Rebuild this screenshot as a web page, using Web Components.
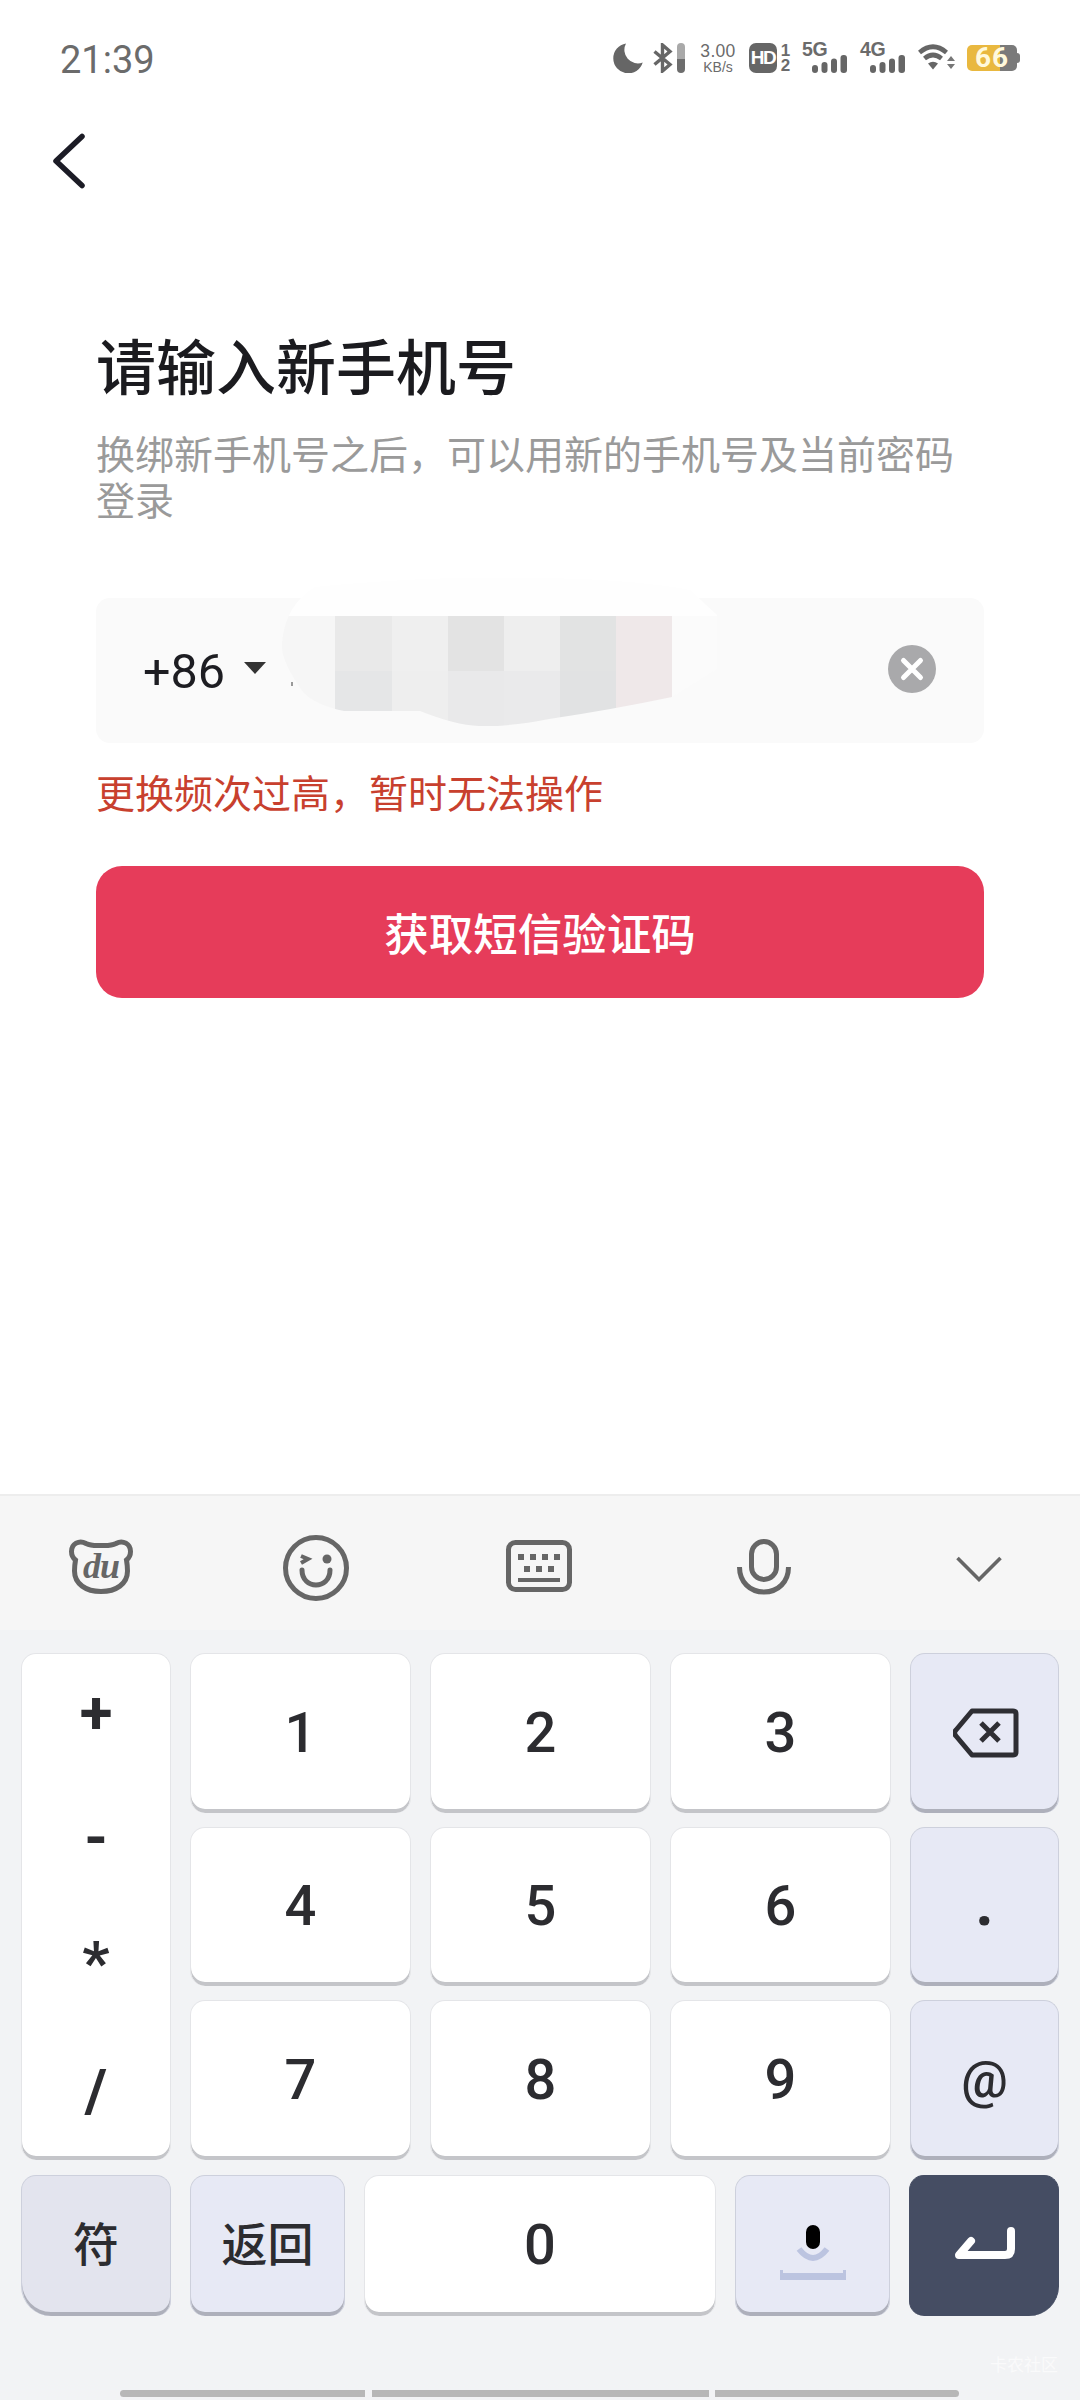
<!DOCTYPE html>
<html lang="zh">
<head>
<meta charset="utf-8">
<title>请输入新手机号</title>
<style>
  html, body { margin: 0; padding: 0; background: #fff; }
  body { font-family: "Noto Sans CJK SC", sans-serif; }
</style>
</head>
<body>
<app-screen></app-screen>
<script>
const templateStatusBar = document.createElement("template");
templateStatusBar.innerHTML = `
  <style>
    :host { display: flex; height: 118px; box-sizing: border-box; padding: 0 60px; align-items: center; justify-content: space-between; color: #6b6b6b; font-family: Roboto, sans-serif; flex: none; }
    .time { font-size: 38px; line-height: 40px; margin-top: 2px; }
    .icons { display: flex; align-items: center; height: 30px; margin-top: -2px; }
    svg { display: block; flex: none; fill: #666; }
    .pill { width: 8px; height: 30px; border-radius: 4px; margin-left: 3px; background: linear-gradient(#a9a9a9 52%, #6d6d6d 52%); }
    .speed { display: flex; flex-direction: column; align-items: center; margin-left: 14px; width: 38px; font-family: "Liberation Sans", sans-serif; }
    .speed b { font-weight: 400; font-size: 17.5px; line-height: 17px; letter-spacing: .3px; }
    .speed i { font-style: normal; font-size: 14px; line-height: 14px; }
    .hd { width: 28px; height: 30px; border-radius: 7px; background: #666; color: #fff; font: 700 19px/30px "Liberation Sans", sans-serif; text-align: center; letter-spacing: -1.5px; margin-left: 12px; }
    .frac { display: flex; flex-direction: column; align-items: center; margin-left: 3px; width: 11px; font: 700 17px/15px "Liberation Sans", sans-serif; }
    .sig { position: relative; width: 45px; height: 30px; margin-left: 11px; }
    .sig + .sig { margin-left: 13px; }
    .sig span { font: 700 19.500px/18px "Liberation Sans", sans-serif; letter-spacing: -.3px; display: block; margin-top: -3px; }
    .sig svg { position: absolute; right: 0; bottom: 0; }
    .wifi { margin-left: 13px; }
    .batt { position: relative; width: 50px; height: 26px; margin-left: 12px; margin-right: 3px; border-radius: 5px; background: linear-gradient(90deg, #e9b83f 66%, #7a7a7a 66%); color: #fff9dc; font: 700 28px/26px Roboto, sans-serif; text-align: center; letter-spacing: 1px; }
    .batt::after { content: ""; position: absolute; right: -3px; top: 8px; width: 3px; height: 10px; border-radius: 0 3px 3px 0; background: #7a7a7a; }
  </style>
  <span class="time">21:39</span>
  <div class="icons">
    <svg width="30" height="30" viewBox="0 0 30 30"><path d="M13 .5A15 15 0 1 0 29.7 19.5 13.5 13.5 0 0 1 13 .5Z"/></svg>
    <svg style="margin-left:10px" width="21" height="30" viewBox="0 0 21 30"><path d="M1.500 8.500 17 21.500 9.500 28V2L17 8.500 1.500 21.500" fill="none" stroke="#666" stroke-width="3.4"/></svg>
    <div class="pill"></div>
    <div class="speed"><b>3.00</b><i>KB/s</i></div>
    <div class="hd">HD</div>
    <div class="frac"><span>1</span><span>2</span></div>
    <div class="sig"><span>5G</span><svg width="35" height="18" viewBox="0 0 35 18"><rect x="0" y="10" width="6" height="8" rx="3"/><rect x="9.500" y="7" width="6" height="11" rx="3"/><rect x="19" y="3.500" width="6" height="14.500" rx="3"/><rect x="28.500" y="0" width="6.500" height="18" rx="3"/></svg></div>
    <div class="sig"><span>4G</span><svg width="35" height="18" viewBox="0 0 35 18"><rect x="0" y="10" width="6" height="8" rx="3"/><rect x="9.500" y="7" width="6" height="11" rx="3"/><rect x="19" y="3.500" width="6" height="14.500" rx="3"/><rect x="28.500" y="0" width="6.500" height="18" rx="3"/></svg></div>
    <svg class="wifi" width="37" height="30" viewBox="0 0 37 30"><path d="M1.500 9.500Q15 -2 28.500 9.500M6.500 15.500Q15 8.500 23.500 15.500" fill="none" stroke="#666" stroke-width="4.6"/><path d="M10 20.500Q15 17 20 20.500L15 26.500Z"/><path d="M33 13 37 18H29ZM29 21H37L33 26Z" fill="#777"/></svg>
    <div class="batt">66</div>
  </div>
`;
class StatusBar extends HTMLElement {
  constructor() {
    super();
    this.attachShadow({ mode: "open" }).appendChild(templateStatusBar.content.cloneNode(true));
  }
}
customElements.define("status-bar", StatusBar);

const templateBackNav = document.createElement("template");
templateBackNav.innerHTML = `
  <style>
    :host { display: block; height: 209px; box-sizing: border-box; padding: 13px 0 0 50px; flex: none; }
    svg { display: block; }
  </style>
  <svg width="40" height="60" viewBox="0 0 40 60"><path d="M32 5.500 6 30 32 54.500" fill="none" stroke="#1c1c26" stroke-width="5.500" stroke-linecap="round" stroke-linejoin="round"/></svg>
`;
class BackNav extends HTMLElement {
  constructor() {
    super();
    this.attachShadow({ mode: "open" }).appendChild(templateBackNav.content.cloneNode(true));
  }
}
customElements.define("back-nav", BackNav);

const templatePhoneField = document.createElement("template");
templatePhoneField.innerHTML = `
  <style>
    :host { display: flex; position: relative; height: 145px; box-sizing: border-box; background: #fafafa; border-radius: 14px; align-items: center; padding: 0 48px 0 47px; }
    .code { font: 400 48.500px/50px Roboto, sans-serif; color: #1d1d22; margin-top: 2px; }
    .arrow { width: 0; height: 0; border: 11.500px solid transparent; border-top: 12px solid #333; border-bottom: 0; margin-left: 19px; margin-top: -5px; }
    .clear { margin-left: auto; margin-top: -3px; display: block; }
    .mask { position: absolute; left: 0; top: -20px; }
  </style>
  <span class="code">+86</span>
  <span class="arrow"></span>
  <svg class="clear" width="48" height="48" viewBox="0 0 48 48"><circle cx="24" cy="24" r="24" fill="#a9a9ab"/><path d="M15.500 15.500 32.500 32.500M32.500 15.500 15.500 32.500" stroke="#fff" stroke-width="5" stroke-linecap="round"/></svg>
  <svg class="mask" width="888" height="170" viewBox="96 578 888 170">
    <defs><clipPath id="blob"><path d="M315 587Q430 575 549 578 640 580 690 590L717 615V669L672 697Q610 710 549 719 510 727 479 726 455 725 420 711H344Q315 705 303 692 280 660 282 643 285 605 315 587Z"/></clipPath></defs>
    <g clip-path="url(#blob)">
      <rect x="96" y="578" width="888" height="38" fill="#fefefe"/>
      <rect x="672" y="616" width="60" height="110" fill="#fbfbfb"/>
      <rect x="282" y="616" width="53" height="110" fill="#f6f6f6"/>
      <rect x="335" y="616" width="57" height="55" fill="#e9e9e9"/>
      <rect x="392" y="616" width="56" height="55" fill="#efefef"/>
      <rect x="448" y="616" width="56" height="55" fill="#e3e3e3"/>
      <rect x="504" y="616" width="56" height="55" fill="#eeeeee"/>
      <rect x="560" y="616" width="56" height="55" fill="#e2e3e3"/>
      <rect x="616" y="616" width="56" height="55" fill="#efe8e9"/>
      <rect x="335" y="671" width="57" height="60" fill="#e5e6e7"/>
      <rect x="392" y="671" width="56" height="60" fill="#eeeeee"/>
      <rect x="448" y="671" width="56" height="60" fill="#e9e9ea"/>
      <rect x="504" y="671" width="56" height="60" fill="#eaeaeb"/>
      <rect x="560" y="671" width="56" height="60" fill="#e1e2e3"/>
      <rect x="616" y="671" width="56" height="60" fill="#efe8e9"/>
    </g>
    <rect x="291" y="682" width="2" height="4" fill="#999"/>
  </svg>
`;
class PhoneField extends HTMLElement {
  constructor() {
    super();
    this.attachShadow({ mode: "open" }).appendChild(templatePhoneField.content.cloneNode(true));
  }
}
customElements.define("phone-field", PhoneField);

const templatePhoneForm = document.createElement("template");
templatePhoneForm.innerHTML = `
  <style>
    :host { display: flex; flex-direction: column; flex: 1; min-height: 0; padding: 0 96px; font-family: "Noto Sans CJK SC", sans-serif; }
    h1 { margin: -3px 0 0; font-size: 60px; line-height: 80px; font-weight: 500; color: #1b1b1f; }
    p { margin: 26px 0 0; font-size: 39px; line-height: 45.500px; color: #9a9a9a; }
    phone-field { margin-top: 77px; }
    .err { margin-top: 23px; font-size: 39px; line-height: 50px; color: #c8402e; }
    button { display: block; border: 0; margin-top: 50px; height: 132px; width: 100%; border-radius: 26px; background: #e63c5a; color: #fff; font: 500 44.500px/50px "Noto Sans CJK SC", sans-serif; padding: 0; }
  </style>
  <h1>请输入新手机号</h1>
  <p>换绑新手机号之后，可以用新的手机号及当前密码登录</p>
  <phone-field></phone-field>
  <div class="err">更换频次过高，暂时无法操作</div>
  <button>获取短信验证码</button>
`;
class PhoneForm extends HTMLElement {
  constructor() {
    super();
    this.attachShadow({ mode: "open" }).appendChild(templatePhoneForm.content.cloneNode(true));
  }
}
customElements.define("phone-form", PhoneForm);

const templateNumKey = document.createElement("template");
templateNumKey.innerHTML = `
  <style>
    :host { display: flex; align-items: center; justify-content: center; box-sizing: border-box; background: #fff; border: 1px solid #e4e5e8; border-bottom: 0; border-radius: 15px; box-shadow: inset 0 -4px 0 #c4c5c9; padding-bottom: 1px; color: #2c2c30; font: 500 56px/60px Roboto, "Noto Sans CJK SC", sans-serif; }
    :host([tone="fn"]) { background: #e7e9f5; border-color: #cdd0dc; box-shadow: inset 0 -4px 0 #aeb0bb; }
    :host([tone="dark"]) { background: #454d63; border-color: #454d63; box-shadow: none; color: #fff; border-bottom-right-radius: 30px; }
  </style>
  <slot></slot>
`;
class NumKey extends HTMLElement {
  constructor() {
    super();
    this.attachShadow({ mode: "open" }).appendChild(templateNumKey.content.cloneNode(true));
  }
}
customElements.define("num-key", NumKey);

const templateKeyToolbar = document.createElement("template");
templateKeyToolbar.innerHTML = `
  <style>
    :host { display: block; position: relative; height: 136px; box-sizing: border-box; border-top: 2px solid #ededed; background: #f6f6f6; }
    .row { display: flex; height: 100%; align-items: center; padding-top: 8px; box-sizing: border-box; }
    svg { display: block; flex: none; fill: none; stroke: #666; stroke-width: 5; }
    .du-wrap { position: relative; width: 64px; height: 56px; margin-left: 69px; margin-top: -2px; }
    .du { position: absolute; left: 0; right: 0; top: 11px; text-align: center; font: italic 700 36px/34px "Liberation Serif", serif; color: #666; letter-spacing: -1px; }
  </style>
  <div class="row">
    <div class="du-wrap">
      <svg width="64" height="56" viewBox="0 0 64 56"><path d="M17 5.500C10 1.500 2.500 6 2.500 13.500 2.500 17 4 20 6.500 22 6 25 5.500 29 5.500 33 5.500 46 17 53.500 32 53.500S58.500 46 58.500 33C58.500 29 58 25 57.500 22 60 20 61.500 17 61.500 13.500 61.500 6 54 1.500 47 5.500 42 8 38 7.500 32 7.500S22 8 17 5.500Z"/></svg>
      <span class="du">du</span>
    </div>
    <svg style="margin-left:150px;margin-top:1px" width="66" height="66" viewBox="0 0 66 66"><circle cx="33" cy="33" r="30.500"/><path d="M19 35C19 55 47 55 47 35" stroke-linecap="round"/><path d="M18 21 25 24 18 28" stroke-width="4"/><circle cx="44" cy="24" r="4.500" fill="#666" stroke="none"/></svg>
    <svg style="margin-left:157px;margin-top:-3px" width="66" height="52" viewBox="0 0 66 52"><rect x="2.500" y="2.500" width="61" height="47" rx="7"/><path d="M12 14h6v6h-6zM24 14h6v6h-6zM36 14h6v6h-6zM48 14h6v6h-6zM18 26h6v6h-6zM30 26h6v6h-6zM42 26h6v6h-6zM12 38h42v4H12z" fill="#666" stroke="none"/></svg>
    <svg style="margin-left:165px;margin-top:0" width="54" height="56" viewBox="0 0 54 56"><rect x="14.500" y="2.500" width="25" height="38" rx="12.500"/><path d="M2.500 28C2.500 43 13 53 27 53S51.500 43 51.500 28"/></svg>
    <svg style="margin-left:165px;margin-top:4px" width="46" height="26" viewBox="0 0 46 26"><path d="M1.500 2 23 23.500 44.500 2" stroke-width="3.600"/></svg>
  </div>
`;
class KeyToolbar extends HTMLElement {
  constructor() {
    super();
    this.attachShadow({ mode: "open" }).appendChild(templateKeyToolbar.content.cloneNode(true));
  }
}
customElements.define("key-toolbar", KeyToolbar);

const templateNumKeyboard = document.createElement("template");
templateNumKeyboard.innerHTML = `
  <style>
    :host { display: flex; flex-direction: column; position: relative; height: 906px; flex: none; background: #f2f3f5; }
    .keys { padding: 23px 21px 0 21px; }
    .grid { display: grid; grid-template-columns: 150px 221px 221px 221px 149px; grid-template-rows: repeat(3, 159.500px); gap: 14px 19px; }
    .ops { grid-row: 1 / span 3; display: grid; grid-template-rows: repeat(4, 125px); justify-items: center; align-items: center; padding: 0 0 12px; align-content: center; font: 700 60px/60px Roboto, sans-serif; }
    .ops span { display: block; }
    .bottom { display: flex; gap: 19px; margin-top: 15px; height: 141px; }
    .bottom > * { flex: none; }
    .cjk { font-size: 46px; font-weight: 500; }
    .fu { border-bottom-left-radius: 30px; background: #e3e4ee; }
    .bar { display: flex; position: absolute; left: 120px; bottom: 3px; height: 7px; }
    .bar i { display: block; height: 7px; background: #b7b7b7; }
    .bar i:first-child { border-radius: 4px 0 0 4px; }
    .bar i:last-child { border-radius: 0 4px 4px 0; }
    .mark { position: absolute; right: 22px; bottom: 26px; color: #fafafb; font: 400 17px/20px "Noto Sans CJK SC", sans-serif; }
    svg { display: block; }
  </style>
  <key-toolbar></key-toolbar>
  <div class="keys">
    <div class="grid">
      <num-key class="ops"><span>+</span><span>-</span><span>*</span><span style="margin-top:6px">/</span></num-key>
      <num-key>1</num-key><num-key>2</num-key><num-key>3</num-key>
      <num-key tone="fn"><svg style="margin-left:2px" width="66" height="50" viewBox="0 0 66 50"><path d="M19 3H60Q63 3 63 6V44Q63 47 60 47H19L3 28Q0 25 3 22Z" fill="none" stroke="#2e2e33" stroke-width="5" stroke-linejoin="round"/><path d="M28 15 46 33M46 15 28 33" stroke="#2e2e33" stroke-width="5"/></svg></num-key>
      <num-key style="grid-column:2">4</num-key><num-key>5</num-key><num-key>6</num-key>
      <num-key tone="fn" style="font-size:64px;font-weight:700;padding-bottom:6px">.</num-key>
      <num-key style="grid-column:2">7</num-key><num-key>8</num-key><num-key>9</num-key>
      <num-key tone="fn" style="font-size:52px;font-weight:500">@</num-key>
    </div>
    <div class="bottom">
      <num-key tone="fn" class="cjk fu" style="width:150px">符</num-key>
      <num-key tone="fn" class="cjk" style="width:155px">返回</num-key>
      <num-key style="width:352px">0</num-key>
      <num-key tone="fn" style="width:155px"><svg style="margin-top:16px" width="66" height="56" viewBox="0 0 66 56"><rect x="26" y="0" width="14" height="24" rx="7" fill="#000"/><path d="M19 24Q33 42 47 24" fill="none" stroke="#bcc4e0" stroke-width="6"/><path d="M0 45H3V48H63V45H66V55H0Z" fill="#bcc4e0"/></svg></num-key>
      <num-key tone="dark" style="width:150px"><svg width="62" height="36" viewBox="0 0 62 36"><path d="M58 4V22Q58 28 52 28H6L18 14" fill="none" stroke="#fff" stroke-width="8" stroke-linecap="round" stroke-linejoin="round"/></svg></num-key>
    </div>
  </div>
  <div class="mark">卡农社区</div>
  <div class="bar"><i style="width:245px"></i><i style="width:337px;margin-left:7px"></i><i style="width:244px;margin-left:6px"></i></div>
`;
class NumKeyboard extends HTMLElement {
  constructor() {
    super();
    this.attachShadow({ mode: "open" }).appendChild(templateNumKeyboard.content.cloneNode(true));
  }
}
customElements.define("num-keyboard", NumKeyboard);

const templateAppScreen = document.createElement("template");
templateAppScreen.innerHTML = `
  <style>
    :host { display: flex; flex-direction: column; width: 1080px; height: 2400px; overflow: hidden; background: #fff; }
  </style>
  <status-bar></status-bar>
  <back-nav></back-nav>
  <phone-form></phone-form>
  <num-keyboard></num-keyboard>
`;
class AppScreen extends HTMLElement {
  constructor() {
    super();
    this.attachShadow({ mode: "open" }).appendChild(templateAppScreen.content.cloneNode(true));
  }
}
customElements.define("app-screen", AppScreen);
</script>
</body>
</html>
